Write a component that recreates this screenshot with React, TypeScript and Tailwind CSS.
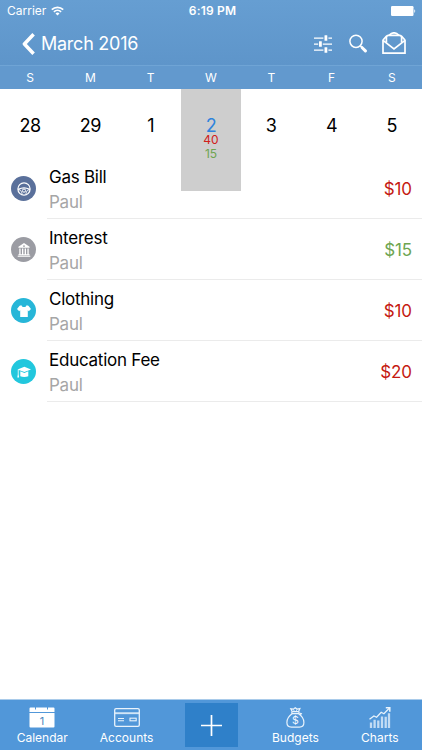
import React from 'react';

type CategoryIcon = 'gas' | 'bank' | 'shirt' | 'school';

interface Transaction {
  id: number;
  title: string;
  account: string;
  amount: string;
  income: boolean;
  icon: CategoryIcon;
  color: string;
}

interface Day {
  label: string;
  selected?: boolean;
  expense?: string;
  income?: string;
}

const weekdays = ['S', 'M', 'T', 'W', 'T', 'F', 'S'];

const days: Day[] = [
  { label: '28' },
  { label: '29' },
  { label: '1' },
  { label: '2', selected: true, expense: '40', income: '15' },
  { label: '3' },
  { label: '4' },
  { label: '5' },
];

const transactions: Transaction[] = [
  { id: 1, title: 'Gas Bill', account: 'Paul', amount: '$10', income: false, icon: 'gas', color: 'bg-[#5a709b]' },
  { id: 2, title: 'Interest', account: 'Paul', amount: '$15', income: true, icon: 'bank', color: 'bg-[#9b9ca3]' },
  { id: 3, title: 'Clothing', account: 'Paul', amount: '$10', income: false, icon: 'shirt', color: 'bg-[#27b6d8]' },
  { id: 4, title: 'Education Fee', account: 'Paul', amount: '$20', income: false, icon: 'school', color: 'bg-[#22c7dd]' },
];

const WifiIcon = () => (
  <svg width="13" height="10" viewBox="0 0 13 10" fill="none" stroke="white" strokeWidth="1.7">
    <path d="M0.8 3.7a8.2 8.2 0 0 1 11.4 0" />
    <path d="M2.9 5.9a5.2 5.2 0 0 1 7.2 0" />
    <path d="M6.5 9.6L4.5 7.5a2.9 2.9 0 0 1 4 0z" fill="white" stroke="none" />
  </svg>
);

const BatteryIcon = () => (
  <svg width="25" height="10" viewBox="0 0 25 10" fill="white">
    <rect width="22.5" height="10" rx="1.2" />
    <path d="M23.3 3.2c1.2.4 1.2 3.2 0 3.6z" />
  </svg>
);

const FilterIcon = () => (
  <svg width="18" height="18" viewBox="0 0 18 18" fill="white">
    <path d="M0 2.5h9.4v1.2H0zM14.4 2.5H18v1.2h-3.6zM0 8.5h4.2v1.2H0zM8.8 8.5H18v1.2H8.8zM0 14.5h9.4v1.2H0zM14.4 14.5H18v1.2h-3.6z" />
    <rect x="10.5" y="0.2" width="2.8" height="5.6" rx="0.4" />
    <rect x="5" y="6.2" width="2.8" height="5.6" rx="0.4" />
    <rect x="10.5" y="12.2" width="2.8" height="5.6" rx="0.4" />
  </svg>
);

const SearchIcon = () => (
  <svg width="18" height="19" viewBox="0 0 18 19" fill="none" stroke="white">
    <circle cx="7" cy="7.3" r="6.1" strokeWidth="1.5" />
    <path d="M11.4 11.9l1.6 1.6" strokeWidth="1.6" />
    <path d="M13.2 13.7l3.2 3.2" strokeWidth="3" strokeLinecap="round" />
  </svg>
);

const MailIcon = () => (
  <svg width="24" height="23" viewBox="0 0 24 23" fill="none" stroke="white" strokeWidth="1.7">
    <path d="M1 7.8v13.4h22V7.8" />
    <path d="M1 8l3.6-3.8M23 8l-3.6-3.8" />
    <path d="M1 8.3l11 8.6 11-8.6" />
    <path d="M4.4 10.4V5.6c0-1.3.9-2.2 2.2-2.2h10.8c1.3 0 2.2.9 2.2 2.2v4.8" />
    <path d="M7 3.4c2-1.9 3.6-2.6 5-2.6s3 .7 5 2.6" />
  </svg>
);

const CategoryGlyph: React.FC<{ icon: CategoryIcon }> = ({ icon }) => {
  switch (icon) {
    case 'gas':
      return (
        <svg width="14" height="14" viewBox="0 0 14 14" fill="none" stroke="white">
          <circle cx="7" cy="7" r="6.1" strokeWidth="1.2" />
          <path d="M1.2 7.3c2.2-1 3.8-1.5 5.8-1.5s3.600.5 5.800 1.500" strokeWidth="1.3" />
          <path d="M1.2 7.8c2.300-.2 3.600 1.300 3.900 5M12.8 7.8c-2.300-.2-3.600 1.300-3.900 5" strokeWidth="1" />
          <circle cx="7" cy="8.600" r="1.600" strokeWidth="1" />
        </svg>
      );
    case 'bank':
      return (
        <svg width="14" height="14" viewBox="0 0 14 14" fill="white">
          <path fillRule="evenodd" d="M7 0l5.6 3.7v1H1.4v-1zM7 2.2a.9.9 0 1 0 0 1.8.9.9 0 0 0 0-1.8z" />
          <path d="M2.3 5.4h1.3v6H2.3zM5 5.4h1.3v6H5zM7.7 5.4H9v6H7.7zM10.4 5.4h1.3v6h-1.3zM1.4 11.2h11.2v1H1.4zM.7 12.7h12.6v1H.7z" />
        </svg>
      );
    case 'shirt':
      return (
        <svg width="14" height="14" viewBox="0 0 14 14" fill="white">
          <path d="M4.4 1.2c.6 2.5 4.6 2.5 5.2 0l1.8.5L14 5l-2.2 2.2-1-.9v6.6H3.2V6.3l-1 .9L0 5l2.6-3.3z" />
        </svg>
      );
    case 'school':
      return (
        <svg width="14" height="14" viewBox="0 0 14 14" fill="white">
          <path d="M7.4 1.8L14 4.5 7.4 7 .5 4.5z" />
          <path d="M3.3 6.3l4.1 1.6 3.9-1.6v5c-2.2 1-5.8 1-8 0z" />
          <path d="M.8 4.8h.8v4.4l.5 3.2H.3l.5-3.2z" />
        </svg>
      );
  }
};

const CalendarIcon = () => (
  <svg width="26" height="21" viewBox="0 0 26 21">
    <path d="M1.5.5H6v2h1v-2h11v2h1v-2h5.500q1 0 1 1V5H.5V1.500q0-1 1-1z" fill="white" />
    <path d="M.5 5.900h25v13.600q0 1-1 1h-23q-1 0-1-1z" fill="white" />
    <text x="13" y="17.500" textAnchor="middle" fontSize="11" fontFamily="Inter, sans-serif" fill="#4b86bd">1</text>
  </svg>
);

const CardIcon = () => (
  <svg width="26" height="19" viewBox="0 0 26 19" fill="none" stroke="#e9f3fc">
    <rect x="0.7" y="0.7" width="24.6" height="17.6" rx="1.4" strokeWidth="1.3" />
    <path d="M1 5.2h24" strokeWidth="1.9" opacity="0.85" />
    <path d="M4 10.5h6M4 12.8h6" strokeWidth="1.1" />
    <rect x="16" y="10.2" width="6.2" height="2.6" strokeWidth="1.1" />
  </svg>
);

const BudgetIcon = () => (
  <svg width="19" height="21" viewBox="0 0 19 21" fill="none" stroke="#e9f3fc" strokeWidth="1.2">
    <path d="M6.3 4.7L4.8 1.8l2.6.4L9.2.8l1.9 1.3 2.8-.5-1.4 3.1" />
    <path d="M7.4 2.4l1 2M11.1 2.2l-.9 2.2" strokeWidth="0.8" />
    <rect x="5.8" y="4.7" width="7.2" height="1.9" rx="0.9" />
    <path d="M6.4 6.6C3.2 8.8.9 12.3.9 15.6c0 3.3 1.6 4.6 4.500 4.600h8c2.900 0 4.500-1.300 4.500-4.600 0-3.300-2.300-6.800-5.500-9" />
    <path d="M13 5.6l3.300.6-1.600 2.400z" fill="#e9f3fc" stroke="none" />
    <text x="9.4" y="17.3" textAnchor="middle" fontSize="10.5" fontFamily="Inter, sans-serif" fill="#f1f8ff" stroke="none">$</text>
  </svg>
);

const ChartIcon = () => (
  <svg width="22" height="21" viewBox="0 0 22 21" fill="none" stroke="#e9f3fc">
    <path d="M0.5 12.3l4.4-3.3 2.7 1.3 4.6-5 2.7 1.500 5.600-5.800" strokeWidth="1.3" />
    <path d="M16.8.8h4v4" strokeWidth="1.5" />
    <path d="M2 21v-5.500M5.600 21v-8.300M9.300 21v-7.500M13 21V9.500M16.700 21V9.800M20 21V6.300" strokeWidth="2.300" opacity="0.75" />
  </svg>
);

const StatusBar = () => (
  <div className="grid h-[22px] grid-cols-3 items-center pl-[7px] pr-[6px] text-[12px] leading-[22px] text-white">
    <div className="flex items-center gap-[5px]">
      <span>Carrier</span>
      <WifiIcon />
    </div>
    <span className="pl-[2px] text-center font-semibold tracking-[0.2px]">6:19 PM</span>
    <div className="flex justify-end">
      <BatteryIcon />
    </div>
  </div>
);

const TabItem: React.FC<{ label: string; children: React.ReactNode }> = ({ label, children }) => (
  <button className="flex flex-1 flex-col items-center pt-[6px] text-white">
    <span className="flex h-[22px] items-center">{children}</span>
    <span className="mt-[2px] text-[12px] leading-[16px]">{label}</span>
  </button>
);

export default function App() {
  return (
    <div className="flex h-[750px] w-[422px] flex-col overflow-hidden bg-white font-['Inter','Liberation_Sans',sans-serif]">
      <header className="bg-linear-to-b from-[#669ed2] to-[#5e95ca]">
        <StatusBar />
        <div className="flex h-[43px] items-center justify-between pl-[22px] pr-[16px]">
          <button className="flex items-center gap-[6px] text-white">
            <svg width="13" height="22" viewBox="0 0 13 22" fill="none" stroke="white" strokeWidth="3.5">
              <path d="M11.6 1.2L2.4 11l9.2 9.8" strokeLinejoin="round" />
            </svg>
            <span className="text-[18px] leading-[22px] tracking-[-0.25px]">March 2016</span>
          </button>
          <div className="flex items-center">
            <span className="mr-[17px]"><FilterIcon /></span>
            <span className="mr-[15px]"><SearchIcon /></span>
            <MailIcon />
          </div>
        </div>
      </header>

      <div className="grid h-6 grid-cols-7 border-t border-[#6fa4d5] bg-[#6299ce] text-center text-[12px] leading-[23px] text-white">
        {weekdays.map((day, i) => (
          <span key={i}>{day}</span>
        ))}
      </div>

      {/* The selected day hangs down over the first row of the list */}
      <div className="grid h-[69px] grid-cols-7">
        {days.map(day => (
          <div
            key={day.label}
            className={`h-[102px] pt-[28px] text-center ${day.selected ? 'bg-[#cecece]' : ''}`}
          >
            <div className={`text-[18px] leading-[18px] tracking-[-0.3px] ${day.selected ? 'text-[#2f83dd]' : 'text-black'}`}>
              {day.label}
            </div>
            {day.expense && <div className="-mt-[2px] text-[12px] leading-[13px] text-[#d0201a]">{day.expense}</div>}
            {day.income && <div className="text-[12px] leading-[15px] text-[#6ea551]">{day.income}</div>}
          </div>
        ))}
      </div>

      <ul className="flex-1">
        {transactions.map(item => (
          <li key={item.id} className="flex h-[61px] items-stretch pl-[11px]">
            <span className={`mt-[18px] flex h-[25px] w-[25px] items-center justify-center rounded-full ${item.color}`}>
              <CategoryGlyph icon={item.icon} />
            </span>
            <div className="ml-[11px] flex flex-1 items-center justify-between border-b border-[#ebebeb] pl-[2px] pr-[10px] pt-[3px]">
              <div className="text-[17px] leading-[25px] tracking-[-0.25px]">
                <div className="text-black">{item.title}</div>
                <div className="text-[#a6a6a6]">{item.account}</div>
              </div>
              <span className={`text-[17px] tracking-[-0.1px] ${item.income ? 'text-[#6ea551]' : 'text-[#c51a12]'}`}>
                {item.amount}
              </span>
            </div>
          </li>
        ))}
      </ul>

      <nav className="flex h-[51px] border-t border-[#a9cbea] bg-[#5197d9]">
        <TabItem label="Calendar"><CalendarIcon /></TabItem>
        <TabItem label="Accounts"><CardIcon /></TabItem>
        <div className="flex flex-1 justify-center pt-[3px]">
          <button className="flex h-[44px] w-[53px] items-center justify-center bg-[#2f80c9]">
            <svg width="21" height="21" viewBox="0 0 21 21" stroke="white" strokeWidth="1.7">
              <path d="M10.5 0v21M0 10.5h21" />
            </svg>
          </button>
        </div>
        <TabItem label="Budgets"><BudgetIcon /></TabItem>
        <TabItem label="Charts"><ChartIcon /></TabItem>
      </nav>
    </div>
  );
}
